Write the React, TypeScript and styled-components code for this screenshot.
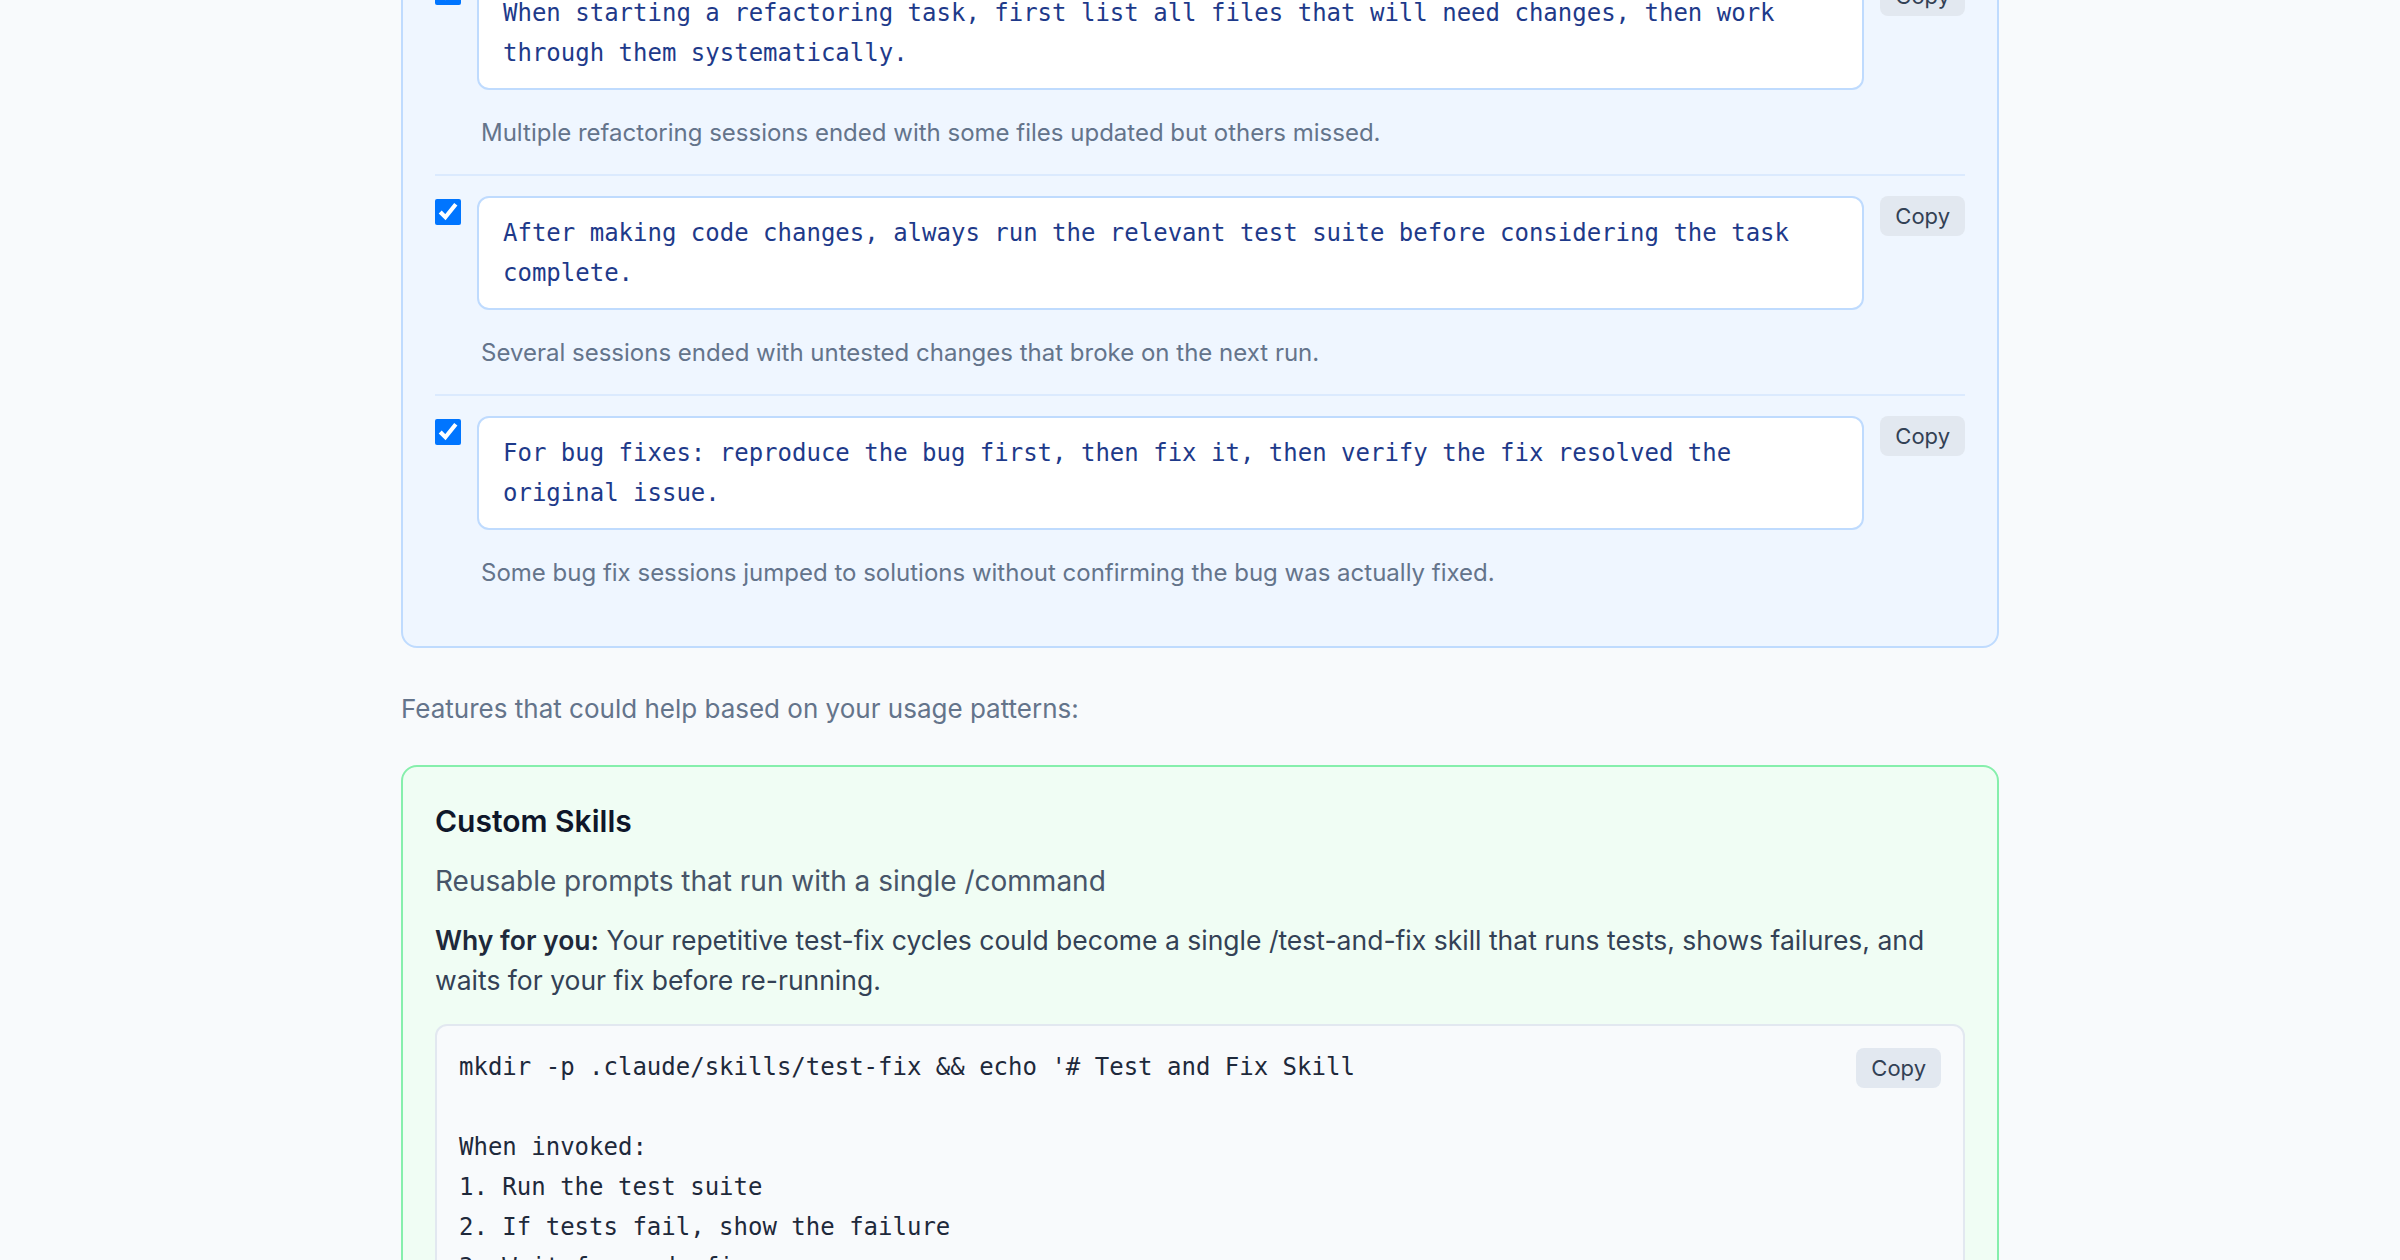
import React, { useState } from 'react';
import styled, { createGlobalStyle } from 'styled-components';

const GlobalStyle = createGlobalStyle`
  body {
    margin: 0;
    background: #f8fafc;
    font-family: Inter, "Noto Sans", "Liberation Sans", sans-serif;
    color: #1e293b;
  }
`;

const rules = [
  {
    id: 'refactor',
    text: 'When starting a refactoring task, first list all files that will need changes, then work through them systematically.',
    reason: 'Multiple refactoring sessions ended with some files updated but others missed.',
  },
  {
    id: 'tests',
    text: 'After making code changes, always run the relevant test suite before considering the task complete.',
    reason: 'Several sessions ended with untested changes that broke on the next run.',
  },
  {
    id: 'bugs',
    text: 'For bug fixes: reproduce the bug first, then fix it, then verify the fix resolved the original issue.',
    reason: 'Some bug fix sessions jumped to solutions without confirming the bug was actually fixed.',
  },
];

const skillCode = `mkdir -p .claude/skills/test-fix && echo '# Test and Fix Skill

When invoked:
1. Run the test suite
2. If tests fail, show the failure
3. Wait for code fix
4. Re-run the tests'`;

const App = () => {
  const [checked, setChecked] = useState<Record<string, boolean>>({
    refactor: true,
    tests: true,
    bugs: true,
  });

  const toggle = (id: string) => setChecked((prev) => ({ ...prev, [id]: !prev[id] }));

  return (
    <>
      <GlobalStyle />
      <Page>
        <Card $tone="blue">
          {rules.map((rule) => (
            <RuleItem key={rule.id}>
              <RuleRow>
                <Check type="checkbox" checked={checked[rule.id]} onChange={() => toggle(rule.id)} />
                <RuleText>{rule.text}</RuleText>
                <CopyButton>Copy</CopyButton>
              </RuleRow>
              <Reason>{rule.reason}</Reason>
            </RuleItem>
          ))}
        </Card>

        <Intro>Features that could help based on your usage patterns:</Intro>

        <Card $tone="green">
          <FeatureTitle>Custom Skills</FeatureTitle>
          <FeatureSubtitle>Reusable prompts that run with a single /command</FeatureSubtitle>
          <FeatureWhy>
            <strong>Why for you:</strong> Your repetitive test-fix cycles could become a single
            /test-and-fix skill that runs tests, shows failures, and waits for your fix before
            re-running.
          </FeatureWhy>
          <CodeBlock>
            <CodeCopy>Copy</CodeCopy>
            <pre>{skillCode}</pre>
          </CodeBlock>
        </Card>
      </Page>
    </>
  );
};

// --- Styled Components ---
const Page = styled.main`
  max-width: 1598px;
  margin: -78px auto 0;
`;

const Card = styled.section<{ $tone: 'blue' | 'green' }>`
  background: ${(p) => (p.$tone === 'blue' ? '#eff6ff' : '#f0fdf4')};
  border: 2px solid ${(p) => (p.$tone === 'blue' ? '#bfdbfe' : '#86efac')};
  border-radius: 16px;
  padding: 32px;
`;

const RuleItem = styled.div`
  padding: 20px 0 24px;
  border-bottom: 2px solid #dbeafe;

  &:last-child {
    border-bottom: none;
  }
`;

const RuleRow = styled.div`
  display: flex;
  align-items: flex-start;
  gap: 16px;
`;

const Check = styled.input`
  width: 26px;
  height: 26px;
  margin: 3px 0 0;
  flex-shrink: 0;
  accent-color: #0075ff;
`;

const RuleText = styled.div`
  flex: 1;
  background: #fff;
  border: 2px solid #bfdbfe;
  border-radius: 12px;
  padding: 15px 24px;
  font-family: "DejaVu Sans Mono", "Liberation Mono", monospace;
  font-size: 24px;
  line-height: 40px;
  color: #1e3a8a;
`;

const CopyButton = styled.button`
  flex-shrink: 0;
  height: 40px;
  padding: 0 15px;
  border: none;
  border-radius: 8px;
  background: #e2e8f0;
  color: #334155;
  font-family: Inter, "Liberation Sans", sans-serif;
  font-size: 22px;
  cursor: pointer;
`;

const Reason = styled.p`
  margin: 26px 0 0 46px;
  font-size: 24px;
  line-height: 34px;
  color: #64748b;
`;

const Intro = styled.p`
  margin: 44px 0 39px;
  font-size: 26px;
  line-height: 34px;
  color: #64748b;
`;

const FeatureTitle = styled.h3`
  margin: 0 0 18px;
  font-size: 30px;
  line-height: 44px;
  font-weight: 600;
  color: #0f172a;
`;

const FeatureSubtitle = styled.p`
  margin: 0 0 19px;
  font-size: 28px;
  line-height: 40px;
  color: #475569;
`;

const FeatureWhy = styled.p`
  margin: 0 0 24px;
  font-size: 26.5px;
  line-height: 40px;
  color: #334155;

  strong {
    font-weight: 600;
    color: #1e293b;
  }
`;

const CodeBlock = styled.div`
  position: relative;
  background: #f8fafc;
  border: 2px solid #e2e8f0;
  border-radius: 12px;
  padding: 21px 22px;

  pre {
    margin: 0;
    font-family: "DejaVu Sans Mono", "Liberation Mono", monospace;
    font-size: 24px;
    line-height: 40px;
    color: #1e293b;
    white-space: pre-wrap;
  }
`;

const CodeCopy = styled(CopyButton)`
  position: absolute;
  top: 22px;
  right: 22px;
`;

export default App;
